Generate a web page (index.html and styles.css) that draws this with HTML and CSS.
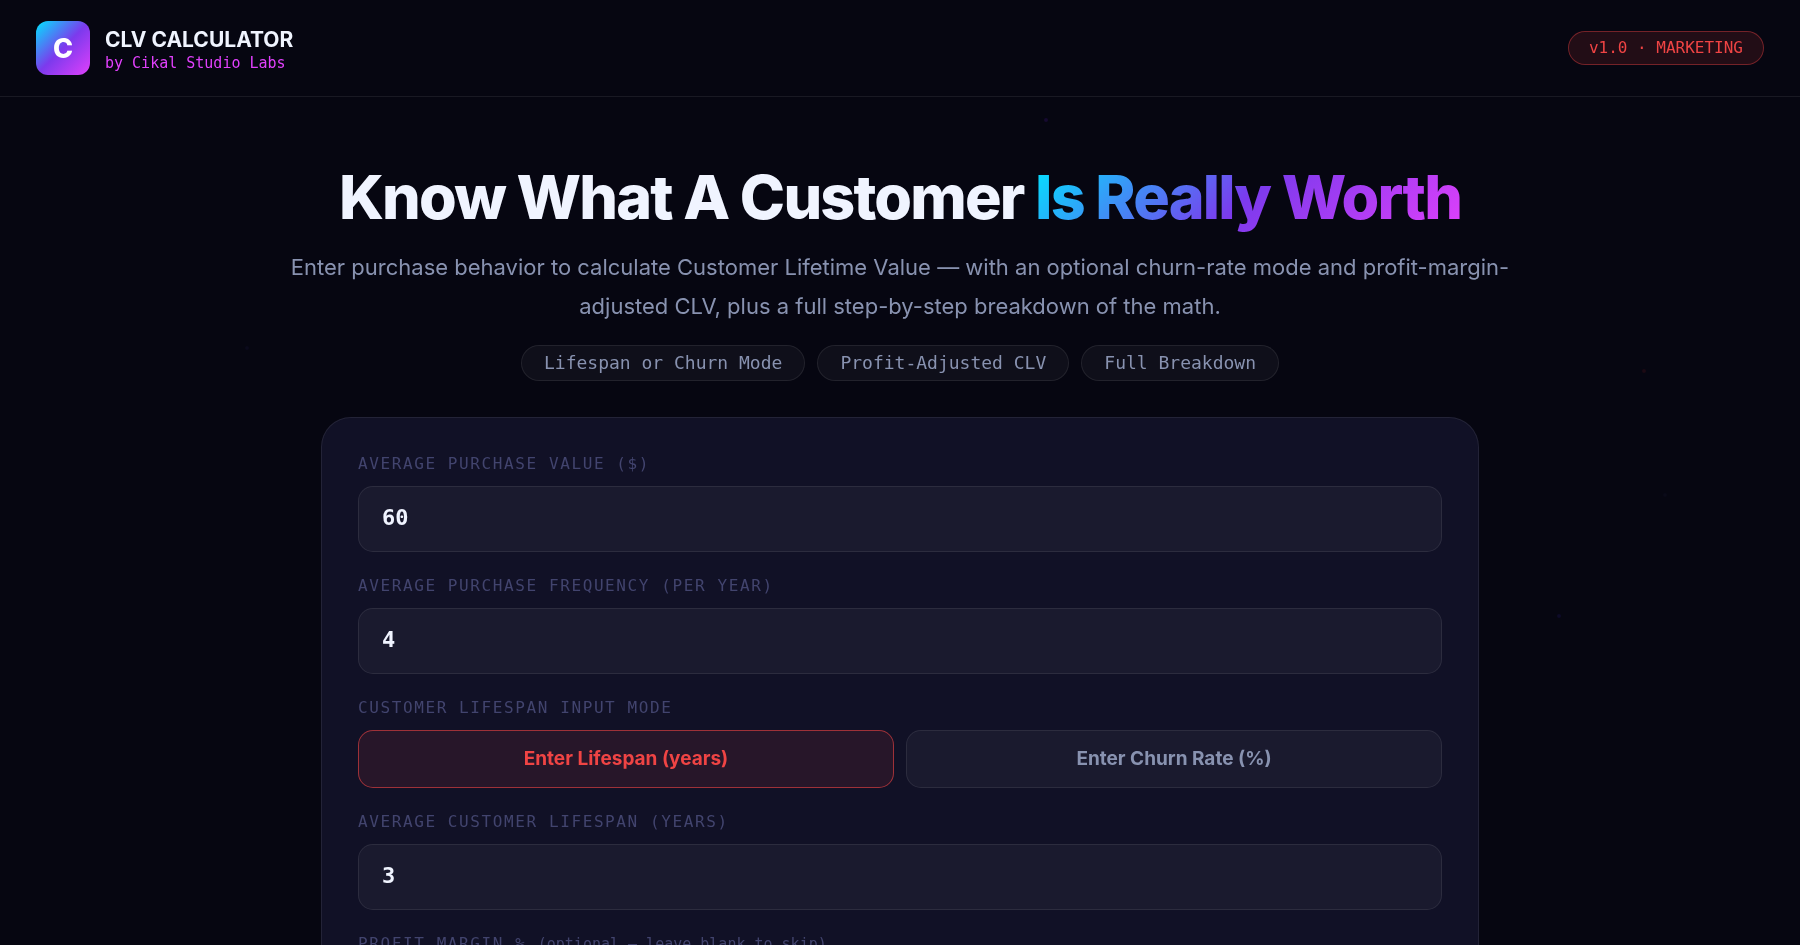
FILE: index.html
```html
<!DOCTYPE html>
<html lang="en">
<head>
  <meta charset="UTF-8">
  <meta name="viewport" content="width=device-width, initial-scale=1.0">
  <title>CLV Calculator | Cikal Studio Labs</title>
  <link rel="stylesheet" href="styles.css">
</head>
<body>
  <div class="particles" aria-hidden="true">
    <span class="dot dot-violet"></span>
    <span class="dot dot-red"></span>
    <span class="dot dot-blue"></span>
    <span class="dot dot-slate"></span>
    <span class="dot dot-slate-left"></span>
  </div>

  <header class="site-header">
    <div class="brand">
      <div class="logo">C</div>
      <div class="brand-text">
        <div class="brand-name">CLV CALCULATOR</div>
        <div class="brand-sub">by Cikal Studio Labs</div>
      </div>
    </div>
    <div class="badge">v1.0 · MARKETING</div>
  </header>

  <main>
    <section class="hero">
      <h1>Know What A Customer <span class="gradient-text">Is Really Worth</span></h1>
      <p>Enter purchase behavior to calculate Customer Lifetime Value — with an optional churn-rate mode and profit-margin-adjusted CLV, plus a full step-by-step breakdown of the math.</p>
      <div class="pills">
        <span class="pill">Lifespan or Churn Mode</span>
        <span class="pill">Profit-Adjusted CLV</span>
        <span class="pill">Full Breakdown</span>
      </div>
    </section>

    <form class="card" id="clv-form">
      <div class="field">
        <label for="purchase-value">AVERAGE PURCHASE VALUE ($)</label>
        <input type="number" id="purchase-value" value="60" min="0">
      </div>

      <div class="field">
        <label for="frequency">AVERAGE PURCHASE FREQUENCY (PER YEAR)</label>
        <input type="number" id="frequency" value="4" min="0">
      </div>

      <div class="field" role="group" aria-labelledby="mode-label">
        <span class="field-label" id="mode-label">CUSTOMER LIFESPAN INPUT MODE</span>
        <div class="modes">
          <button type="button" class="mode active">Enter Lifespan (years)</button>
          <button type="button" class="mode">Enter Churn Rate (%)</button>
        </div>
      </div>

      <div class="field">
        <label for="lifespan">AVERAGE CUSTOMER LIFESPAN (YEARS)</label>
        <input type="number" id="lifespan" value="3" min="0">
      </div>

      <div class="field">
        <label for="margin">PROFIT MARGIN % <span class="hint">(optional — leave blank to skip)</span></label>
        <input type="number" id="margin" min="0" max="100">
      </div>
    </form>
  </main>
</body>
</html>
```

FILE: styles.css
```css
* {
  box-sizing: border-box;
  margin: 0;
  padding: 0;
}

:root {
  --bg: #060611;
  --card: #111126;
  --text: #f0f4ff;
  --muted: #8892b0;
  --dim: #42446e;
  --red: #ef4444;
  --line: rgba(255, 255, 255, 0.08);
  --grad: linear-gradient(135deg, #00e5ff, #7c3aed 50%, #e040fb);
  --mono: "DejaVu Sans Mono", monospace;
}

body {
  font-family: Inter, sans-serif;
  background: var(--bg);
  color: var(--text);
  min-height: 100vh;
}

.particles {
  position: fixed;
  inset: 0;
  z-index: -1;
}

.dot {
  position: absolute;
  width: 4px;
  height: 4px;
  border-radius: 50%;
}

.dot-violet { left: 58%; top: 12.5%; background: #160a30; }
.dot-red { left: 91.2%; top: 39%; background: #1c0a14; }
.dot-blue { left: 86.5%; top: 65%; background: #0e0b28; }
.dot-slate { left: 92.4%; top: 52.2%; background: #0a0a18; }
.dot-slate-left { left: 13.6%; top: 36.6%; background: #0b0a1c; }

.site-header {
  display: flex;
  align-items: center;
  justify-content: space-between;
  padding: 21px 36px;
  border-bottom: 1px solid var(--line);
}

.brand {
  display: flex;
  align-items: center;
  gap: 15px;
}

.logo {
  display: flex;
  align-items: center;
  justify-content: center;
  width: 54px;
  height: 54px;
  border-radius: 12px;
  background: var(--grad);
  color: #fff;
  font-size: 27px;
  font-weight: 800;
}

.brand-text {
  padding-top: 3px;
}

.brand-name {
  font-size: 21px;
  font-weight: 700;
  line-height: 26px;
}

.brand-sub {
  color: #e040fb;
  font-family: var(--mono);
  font-size: 15px;
  line-height: 20px;
}

.badge {
  padding: 7px 20px;
  border: 1px solid rgba(239, 68, 68, 0.4);
  border-radius: 30px;
  background: rgba(239, 68, 68, 0.12);
  color: var(--red);
  font-family: var(--mono);
  font-size: 16px;
  line-height: 18px;
}

.hero {
  max-width: 1260px;
  margin: 0 auto;
  padding: 66px 12px 36px;
  text-align: center;
}

.hero h1 {
  font-size: 61px;
  font-weight: 800;
  line-height: 69px;
  letter-spacing: -0.03em;
  margin-bottom: 16px;
}

.gradient-text {
  background: var(--grad);
  -webkit-background-clip: text;
  background-clip: text;
  color: transparent;
}

.hero p {
  color: var(--muted);
  font-size: 22px;
  line-height: 39px;
  margin-bottom: 19px;
}

.pills {
  display: flex;
  flex-wrap: wrap;
  justify-content: center;
  gap: 12px;
}

.pill {
  padding: 6px 22px;
  border: 1px solid var(--line);
  border-radius: 30px;
  background: rgba(255, 255, 255, 0.04);
  color: var(--muted);
  font-family: var(--mono);
  font-size: 18px;
  line-height: 22px;
}

.card {
  display: flex;
  flex-direction: column;
  gap: 24px;
  max-width: 1158px;
  margin: 0 auto 60px;
  padding: 36px;
  border: 1px solid var(--line);
  border-radius: 30px;
  background: var(--card);
}

.field label,
.field-label {
  display: block;
  margin-bottom: 12px;
  color: var(--dim);
  font-family: var(--mono);
  font-size: 16px;
  line-height: 20px;
  letter-spacing: 0.1em;
}

.hint {
  font-size: 15px;
  letter-spacing: 0;
}

.field input {
  display: block;
  width: 100%;
  height: 66px;
  padding: 0 23px 3px;
  border: 1px solid var(--line);
  border-radius: 15px;
  background: rgba(255, 255, 255, 0.04);
  color: var(--text);
  font-family: var(--mono);
  font-size: 22px;
  font-weight: 700;
  outline: none;
  appearance: textfield;
}

.field input:focus {
  border-color: var(--red);
}

.modes {
  display: grid;
  grid-template-columns: 1fr 1fr;
  gap: 12px;
}

.mode {
  padding: 16px;
  border: 1px solid var(--line);
  border-radius: 15px;
  background: rgba(255, 255, 255, 0.04);
  color: var(--muted);
  font-family: inherit;
  font-size: 19px;
  font-weight: 700;
  line-height: 24px;
  cursor: pointer;
}

.mode.active {
  border-color: rgba(239, 68, 68, 0.6);
  background: rgba(239, 68, 68, 0.1);
  color: var(--red);
}
```
